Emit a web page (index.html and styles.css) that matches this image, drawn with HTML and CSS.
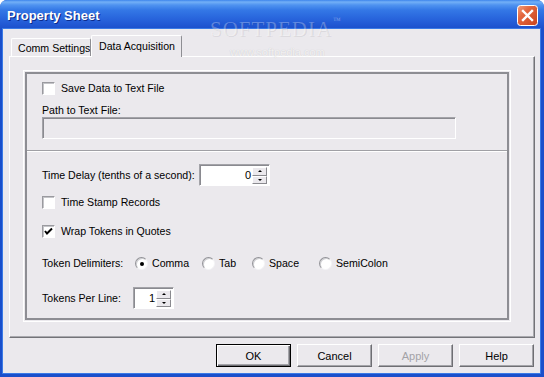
FILE: index.html
```html
<!DOCTYPE html>
<html>
<head>
<meta charset="utf-8">
<title>Property Sheet</title>
<link rel="stylesheet" href="styles.css">
</head>
<body>
<div class="window">
  <div class="titlebar">
    <span class="title">Property Sheet</span>
    <span class="close">
      <svg width="21" height="21" viewBox="0 0 21 21">
        <defs>
          <linearGradient id="cg" x1="0" y1="0" x2="1" y2="1">
            <stop offset="0" stop-color="#f2a27f"/>
            <stop offset="0.35" stop-color="#e4683f"/>
            <stop offset="1" stop-color="#c8431d"/>
          </linearGradient>
        </defs>
        <rect x="0.5" y="0.5" width="20" height="20" rx="3" fill="url(#cg)" stroke="#ffffff"/>
        <path d="M6 6 L15 15 M15 6 L6 15" stroke="#ffffff" stroke-width="2.4" stroke-linecap="square"/>
      </svg>
    </span>
  </div>
  <div class="client">
    <div class="tabs">
      <div class="tab">Comm Settings</div>
      <div class="tab active">Data Acquisition</div>
    </div>
    <div class="page">
      <div class="group">
        <div class="group-inner">
          <div class="section sec-top">
            <div class="row check-row">
              <span class="checkbox"></span>
              <span class="text">Save Data to Text File</span>
            </div>
            <div class="field-label">Path to Text File:</div>
            <div class="textfield"></div>
          </div>
          <div class="divider"></div>
          <div class="section sec-bottom">
            <div class="row row-delay">
              <span class="lbl lbl-delay">Time Delay (tenths of a second):</span>
              <div class="spin spin-delay">
                <span class="val">0</span>
                <span class="spin-btns">
                  <span class="sbtn"><span class="arr up"></span></span>
                  <span class="sbtn"><span class="arr down"></span></span>
                </span>
              </div>
            </div>
            <div class="row check-row row-stamp">
              <span class="checkbox"></span>
              <span class="text">Time Stamp Records</span>
            </div>
            <div class="row check-row row-wrap">
              <span class="checkbox checked">
                <svg width="11" height="11" viewBox="0 0 11 11"><path d="M2 5 L4 7.5 L9 2.5" fill="none" stroke="#000" stroke-width="2"/></svg>
              </span>
              <span class="text">Wrap Tokens in Quotes</span>
            </div>
            <div class="row row-delim">
              <span class="lbl lbl-delim">Token Delimiters:</span>
              <span class="opt opt-comma"><span class="radio on"></span>Comma</span>
              <span class="opt opt-tab"><span class="radio"></span>Tab</span>
              <span class="opt opt-space"><span class="radio"></span>Space</span>
              <span class="opt"><span class="radio"></span>SemiColon</span>
            </div>
            <div class="row row-tokens">
              <span class="lbl lbl-tokens">Tokens Per Line:</span>
              <div class="spin spin-tokens">
                <span class="val">1</span>
                <span class="spin-btns">
                  <span class="sbtn"><span class="arr up"></span></span>
                  <span class="sbtn"><span class="arr down"></span></span>
                </span>
              </div>
            </div>
          </div>
        </div>
      </div>
    </div>
    <div class="buttons">
      <div class="btn default">OK</div>
      <div class="btn">Cancel</div>
      <div class="btn disabled">Apply</div>
      <div class="btn">Help</div>
    </div>
  </div>
  <div class="watermark">
    <span class="wm-big">SOFTPEDIA</span>
    <span class="wm-tm">™</span>
    <span class="wm-url">www.softpedia.com</span>
  </div>
</div>
</body>
</html>
```

FILE: styles.css
```css
* { box-sizing: border-box; }

html, body {
  margin: 0;
  padding: 0;
  background: #ffffff;
}

body {
  width: 544px;
  height: 377px;
  overflow: hidden;
  font-family: "Liberation Sans", Arial, sans-serif;
  font-size: 10.6px;
  color: #000;
  white-space: nowrap;
}

.window {
  position: relative;
  width: 544px;
  height: 377px;
  display: flex;
  flex-direction: column;
  background: #1a4fcb;
  border-radius: 7px 7px 0 0;
  overflow: hidden;
}

.titlebar {
  height: 29px;
  flex: none;
  display: flex;
  align-items: center;
  justify-content: space-between;
  padding: 0 6px 0 7px;
  background: linear-gradient(to bottom, #3d85ec 0, #73b0f7 2px, #4f93f0 5px, #3478e6 10px, #2a68de 17px, #235bd6 23px, #1b4fcb 29px);
}

.title {
  font-weight: bold;
  font-size: 13px;
  color: #fff;
  text-shadow: 1px 1px 0 #0c2b8c;
  margin-top: 1px;
}

.close {
  display: flex;
  width: 21px;
  height: 21px;
  margin-top: 1px;
}

.client {
  flex: 1;
  margin: 0 4px 4px 3px;
  background: #ebe9ed;
  box-shadow: 0 0 0 1px #3a7ae6;
  display: flex;
  flex-direction: column;
  padding: 6px 5px 6px 6px;
}

.tabs {
  height: 21px;
  display: flex;
  align-items: flex-end;
  padding-left: 2px;
  position: relative;
  z-index: 1;
}

.tab {
  height: 18px;
  width: 80px;
  flex: none;
  overflow: hidden;
  border: 1px solid #fff;
  border-right-color: #8e8e93;
  border-bottom: none;
  border-radius: 2px 2px 0 0;
  padding: 3px 0 0 6px;
  line-height: 13px;
  background: #ebe9ed;
}

.tab.active {
  width: 91px;
  height: 22px;
  margin-bottom: -1px;
  padding: 4px 0 0 7px;
}

.page {
  width: 526px;
  height: 282px;
  border: 1px solid;
  border-color: #fff #737378 #737378 #fff;
  box-shadow: inset -1px -1px 0 #a9a9ae;
  padding: 13px;
}

.group {
  width: 488px;
  height: 252px;
  border: 1px solid #fff;
  padding: 1px;
}

.group-inner {
  height: 100%;
  border: 2px solid #8d8d93;
  display: flex;
  flex-direction: column;
}

.section {
  padding-left: 15px;
}

.sec-top {
  height: 76px;
  padding-top: 8px;
}

.divider {
  height: 2px;
  border-top: 1px solid #a0a0a5;
  border-bottom: 1px solid #fff;
}

.sec-bottom {
  flex: 1;
  padding-top: 12px;
}

.row {
  display: flex;
  align-items: center;
  line-height: 13px;
}

.check-row {
  height: 13px;
}

.check-row .text {
  margin-left: 6px;
}

.checkbox {
  width: 13px;
  height: 13px;
  flex: none;
  background: #fff;
  border: 1px solid;
  border-color: #9a9a9f #fff #fff #9a9a9f;
  box-shadow: inset 1px 1px 0 #c4c4c8;
  display: flex;
  align-items: center;
  justify-content: center;
}

.field-label {
  line-height: 13px;
  margin-top: 9px;
}

.textfield {
  width: 414px;
  height: 22px;
  border: 1px solid;
  border-color: #a3a3a8 #fff #fff #a3a3a8;
  box-shadow: inset 1px 1px 0 #8a8a90;
}

.row-delay {
  height: 22px;
}

.lbl { flex: none; }
.lbl-delay { width: 157px; }
.lbl-delim { width: 93px; }
.lbl-tokens { width: 91px; }

.spin {
  display: flex;
  flex: none;
  height: 22px;
  background: #fff;
  border: 1px solid;
  border-color: #a3a3a8 #fff #fff #a3a3a8;
  box-shadow: inset 1px 1px 0 #8a8a90;
  padding: 2px 2px 1px 2px;
}

.spin-delay { width: 71px; }
.spin-tokens { width: 41px; }

.spin .val {
  flex: 1;
  text-align: right;
  padding-right: 1px;
  line-height: 17px;
  font-size: 11px;
}

.spin-btns {
  width: 15px;
  display: flex;
  flex-direction: column;
}

.sbtn {
  flex: 1;
  background: #ebe9ed;
  border: 1px solid;
  border-color: #fff #8a8a8f #8a8a8f #fff;
  display: flex;
  align-items: center;
  justify-content: center;
}

.arr {
  width: 0;
  height: 0;
  border-left: 2px solid transparent;
  border-right: 2px solid transparent;
}

.arr.up { border-bottom: 2px solid #000; }
.arr.down { border-top: 2px solid #000; }

.row-stamp { margin-top: 10px; }
.row-wrap { margin-top: 16px; }

.row-delim {
  height: 13px;
  margin-top: 19px;
}

.opt {
  display: flex;
  align-items: center;
  flex: none;
}

.opt-comma { width: 67px; }
.opt-tab { width: 50px; }
.opt-space { width: 67px; }

.radio {
  width: 13px;
  height: 13px;
  margin-right: 4px;
  border-radius: 50%;
  border: 1px solid;
  border-color: #929297 #f4f4f6 #f4f4f6 #929297;
  background: #fff;
  box-shadow: inset 1px 1px 0 #cfcfd3;
  display: flex;
  align-items: center;
  justify-content: center;
}

.radio.on::after {
  content: "";
  width: 4px;
  height: 4px;
  border-radius: 50%;
  background: #000;
}

.row-tokens {
  height: 22px;
  margin-top: 17px;
}

.buttons {
  margin-top: 6px;
  display: flex;
  justify-content: flex-end;
  gap: 6px;
  padding-right: 1px;
}

.btn {
  width: 75px;
  height: 23px;
  border: 1px solid;
  border-color: #fff #6e6e73 #6e6e73 #fff;
  box-shadow: inset -1px -1px 0 #a4a4a9;
  display: flex;
  align-items: center;
  justify-content: center;
  font-size: 11px;
}

.btn.default {
  border: 1px solid #000;
  box-shadow: inset 1px 1px 0 #fff, inset -1px -1px 0 #6e6e73, inset -2px -2px 0 #a4a4a9;
}

.btn.disabled {
  color: #a3a2a7;
}

.watermark {
  position: absolute;
  left: 0;
  top: 0;
  pointer-events: none;
  font-family: "Liberation Serif", "Times New Roman", serif;
}

.wm-big {
  position: absolute;
  left: 210px;
  top: 17px;
  font-size: 21px;
  letter-spacing: 1px;
  color: rgba(255, 255, 255, 0.28);
  text-shadow: 1px 1px 0 rgba(0, 0, 0, 0.08);
  white-space: nowrap;
}

.wm-tm {
  position: absolute;
  left: 333px;
  top: 16px;
  font-size: 8px;
  color: rgba(255, 255, 255, 0.35);
}

.wm-url {
  position: absolute;
  left: 230px;
  top: 46px;
  font-family: "Liberation Sans", Arial, sans-serif;
  font-size: 11px;
  color: rgba(255, 255, 255, 0.75);
  text-shadow: 0 0 1px rgba(0, 0, 0, 0.18);
  white-space: nowrap;
}
```
